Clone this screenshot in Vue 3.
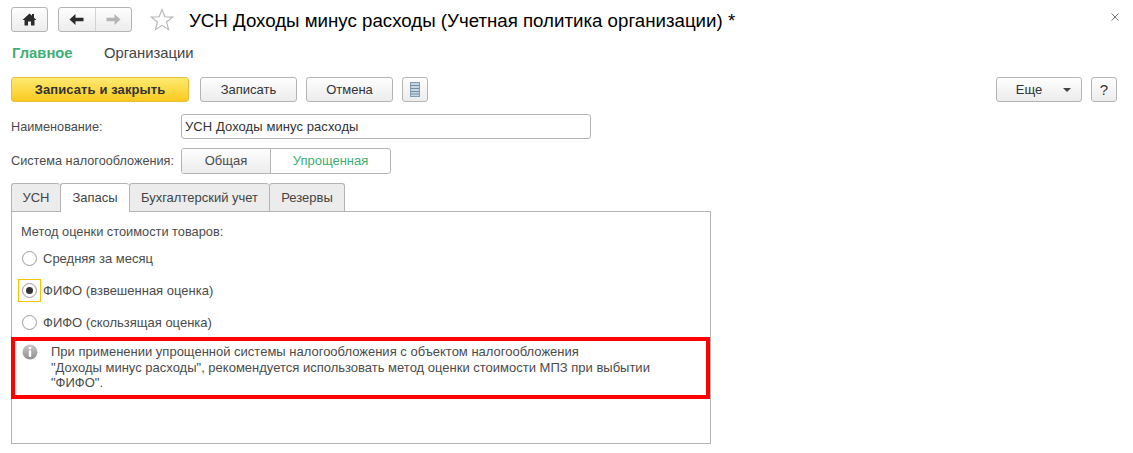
<script setup>
const tabs = [
  { name: 'УСН', width: 49 },
  { name: 'Запасы', width: 69, active: true },
  { name: 'Бухгалтерский учет', width: 140 },
  { name: 'Резервы', width: 76 }
]
const radios = [
  { label: 'Средняя за месяц' },
  { label: 'ФИФО (взвешенная оценка)', checked: true },
  { label: 'ФИФО (скользящая оценка)' }
]
</script>

<template>
  <div class="page">
    <header class="head">
      <button class="btn home" aria-label="Домой">
        <svg width="15" height="13" viewBox="0 0 15 13"><path d="M7.5 0.5 L0.5 7 H2.5 V12.5 H6 V8.5 H9 V12.5 H12.5 V7 H14.5 L12 4.7 V1 H10 V2.8 Z" fill="#2b2b2b"/></svg>
      </button>
      <div class="btn nav">
        <span class="nav-cell">
          <svg width="15" height="11" viewBox="0 0 15 11"><path d="M6.5 0 V3.8 H14.5 V7.2 H6.5 V11 L0.5 5.5 Z" fill="#2b2b2b"/></svg>
        </span>
        <span class="nav-cell next">
          <svg width="15" height="11" viewBox="0 0 15 11"><path d="M8.5 0 V3.8 H0.5 V7.2 H8.5 V11 L14.5 5.5 Z" fill="#b5b5b5"/></svg>
        </span>
      </div>
      <svg class="star" width="24" height="23" viewBox="0 0 24 23"><path d="M12 1.5 L14.8 8.7 L22.6 9.1 L16.5 14 L18.6 21.6 L12 17.3 L5.4 21.6 L7.5 14 L1.4 9.1 L9.2 8.7 Z" fill="#fff" stroke="#b4b4b4" stroke-width="1.1"/></svg>
      <h1 class="title">УСН Доходы минус расходы (Учетная политика организации) *</h1>
      <svg class="close" width="8" height="8" viewBox="0 0 8 8"><path d="M0.5 0.5 L7.5 7.5 M7.5 0.5 L0.5 7.5" stroke="#777" stroke-width="1"/></svg>
    </header>

    <nav class="sections">
      <span class="section on">Главное</span>
      <span class="section">Организации</span>
    </nav>

    <div class="toolbar">
      <button class="btn primary">Записать и закрыть</button>
      <button class="btn save">Записать</button>
      <button class="btn cancel">Отмена</button>
      <button class="btn list" aria-label="Список">
        <svg width="10" height="15" viewBox="0 0 10 15">
          <rect x="0.5" y="0.5" width="9" height="14" fill="#c5d6e2" stroke="#7f9cb2"/>
          <path d="M1 3.5 H9 M1 6.5 H9 M1 9.5 H9 M1 12 H9" stroke="#6f8ea6" stroke-width="1"/>
        </svg>
      </button>
      <button class="btn more">Еще<i class="caret"></i></button>
      <button class="btn help">?</button>
    </div>

    <div class="row name-row">
      <label class="label">Наименование:</label>
      <div class="input">УСН Доходы минус расходы</div>
    </div>

    <div class="row tax-row">
      <label class="label">Система налогообложения:</label>
      <div class="toggle">
        <span class="toggle-off">Общая</span>
        <span class="toggle-on">Упрощенная</span>
      </div>
    </div>

    <div class="tabs">
      <span
        v-for="tab in tabs"
        :key="tab.name"
        class="tab"
        :class="{ active: tab.active }"
        :style="{ width: tab.width + 'px' }"
      >{{ tab.name }}</span>
    </div>

    <section class="panel">
      <div class="method">Метод оценки стоимости товаров:</div>
      <div v-for="r in radios" :key="r.label" class="radio-row">
        <span class="radio-box" :class="{ focus: r.checked }">
          <span class="radio" :class="{ checked: r.checked }"></span>
        </span>
        <span class="radio-label">{{ r.label }}</span>
      </div>
      <div class="notice">
        <svg class="info" width="16" height="16" viewBox="0 0 16 16">
          <defs>
            <linearGradient id="infoG" x1="0" y1="0" x2="0" y2="1">
              <stop offset="0" stop-color="#c9c9c9"/>
              <stop offset="1" stop-color="#8e8e8e"/>
            </linearGradient>
          </defs>
          <circle cx="8" cy="8" r="7.5" fill="url(#infoG)"/>
          <rect x="6.8" y="3" width="2.4" height="2.2" fill="#fff"/>
          <rect x="6.8" y="6.4" width="2.4" height="6.4" fill="#fff"/>
        </svg>
        <p class="notice-text">При применении упрощенной системы налогообложения с объектом налогообложения<br>"Доходы минус расходы", рекомендуется использовать метод оценки стоимости МПЗ при выбытии<br>"ФИФО".</p>
      </div>
    </section>
  </div>
</template>

<style>
html, body { margin: 0; background: #fff; }
</style>

<style scoped>
.page {
  width: 1133px;
  height: 453px;
  overflow: hidden;
  box-sizing: border-box;
  padding: 7px 16px 0 11px;
  font-family: "Liberation Sans", Arial, sans-serif;
  font-size: 13px;
  color: #4b4b4b;
  background: #fff;
}
.head {
  display: flex;
  align-items: center;
  height: 25px;
}
.btn {
  box-sizing: border-box;
  height: 25px;
  padding: 0;
  border: 1px solid #b4b4b4;
  border-radius: 3px;
  background: linear-gradient(#fefefe, #ececec);
  font: inherit;
  color: #333;
  display: flex;
  align-items: center;
  justify-content: center;
}
.home { width: 37px; }
.nav { width: 74px; margin-left: 10px; }
.nav-cell {
  flex: 1;
  height: 100%;
  display: flex;
  align-items: center;
  justify-content: center;
}
.nav-cell.next { border-left: 1px solid #d2d2d2; }
.star { margin-left: 18px; }
.title {
  margin: 0 0 0 15px;
  font-size: 18.7px;
  font-weight: 400;
  color: #000;
  white-space: nowrap;
  line-height: 25px;
  position: relative;
  top: 1px;
}
.close { margin-left: auto; margin-right: -2px; position: relative; top: -3px; }
.sections {
  display: flex;
  height: 20px;
  margin-top: 11px;
  font-size: 14.8px;
  line-height: 20px;
}
.section { margin-left: 1px; width: 91px; color: #444; }
.section.on { color: #3fae74; font-weight: 700; }
.toolbar {
  display: flex;
  align-items: center;
  margin-top: 14px;
}
.primary {
  width: 178px;
  border-color: #e6bd3c;
  background: linear-gradient(#feea70, #fbc91f);
  font-weight: 700;
  letter-spacing: 0.1px;
  color: #333;
}
.save { width: 97px; margin-left: 11px; }
.cancel { width: 87px; margin-left: 9px; }
.list { width: 26px; margin-left: 9px; }
.more { width: 86px; margin-left: auto; position: relative; padding-right: 20px; }
.caret {
  position: absolute;
  right: 10px;
  top: 10px;
  border-left: 4px solid transparent;
  border-right: 4px solid transparent;
  border-top: 4px solid #444;
}
.help { width: 26px; margin-left: 9px; font-size: 15px; }
.row { display: flex; align-items: center; }
.label { width: 170px; flex: none; white-space: nowrap; font-size: 12.7px; }
.name-row { margin-top: 12px; height: 25px; }
.input {
  box-sizing: border-box;
  width: 410px;
  height: 25px;
  line-height: 23px;
  padding-left: 3px;
  border: 1px solid #b4b4b4;
  border-radius: 3px;
  color: #333;
  letter-spacing: 0.08px;
}
.tax-row { margin-top: 9px; height: 26px; }
.toggle {
  box-sizing: border-box;
  display: flex;
  width: 210px;
  height: 26px;
  border: 1px solid #b4b4b4;
  border-radius: 3px;
  line-height: 24px;
  text-align: center;
  overflow: hidden;
}
.toggle-off {
  width: 88px;
  border-right: 1px solid #b4b4b4;
  background: linear-gradient(#fefefe, #ececec);
}
.toggle-on { flex: 1; color: #3fae74; }
.tabs {
  display: flex;
  height: 28px;
  margin-top: 9px;
  position: relative;
  z-index: 1;
}
.tab {
  box-sizing: border-box;
  height: 28px;
  line-height: 27px;
  text-align: center;
  background: #ececec;
  border: 1px solid #b4b4b4;
  border-bottom: none;
  border-right: none;
  border-radius: 3px 3px 0 0;
  color: #444;
}
.tab:last-child { border-right: 1px solid #b4b4b4; }
.tab.active { background: #fff; height: 29px; }
.panel {
  box-sizing: border-box;
  width: 700px;
  height: 233px;
  border: 1px solid #b4b4b4;
}
.method { margin: 12px 0 0 9px; line-height: 15px; font-size: 12.8px; }
.radio-row {
  display: flex;
  align-items: center;
  height: 24px;
  margin-top: 8px;
  padding-left: 6px;
}
.method + .radio-row { margin-top: 7px; }
.radio-box {
  box-sizing: border-box;
  width: 23px;
  height: 23px;
  display: flex;
  align-items: center;
  justify-content: center;
  border: 1px solid transparent;
}
.radio-box.focus { border-color: #f7c600; }
.radio {
  box-sizing: border-box;
  width: 15px;
  height: 15px;
  border: 1px solid #999;
  border-radius: 50%;
  background: #fff;
  display: flex;
  align-items: center;
  justify-content: center;
}
.radio.checked::after {
  content: "";
  width: 7px;
  height: 7px;
  border-radius: 50%;
  background: #333;
}
.radio-label { margin-left: 2px; }
.notice {
  box-sizing: border-box;
  display: flex;
  width: 699px;
  height: 62px;
  margin: 3px 0 0 -1px;
  border: 4px solid #f00;
  padding: 3px 0 0 7px;
}
.info { flex: none; }
.notice-text {
  margin: 0 0 0 13px;
  line-height: 15.5px;
}
</style>
